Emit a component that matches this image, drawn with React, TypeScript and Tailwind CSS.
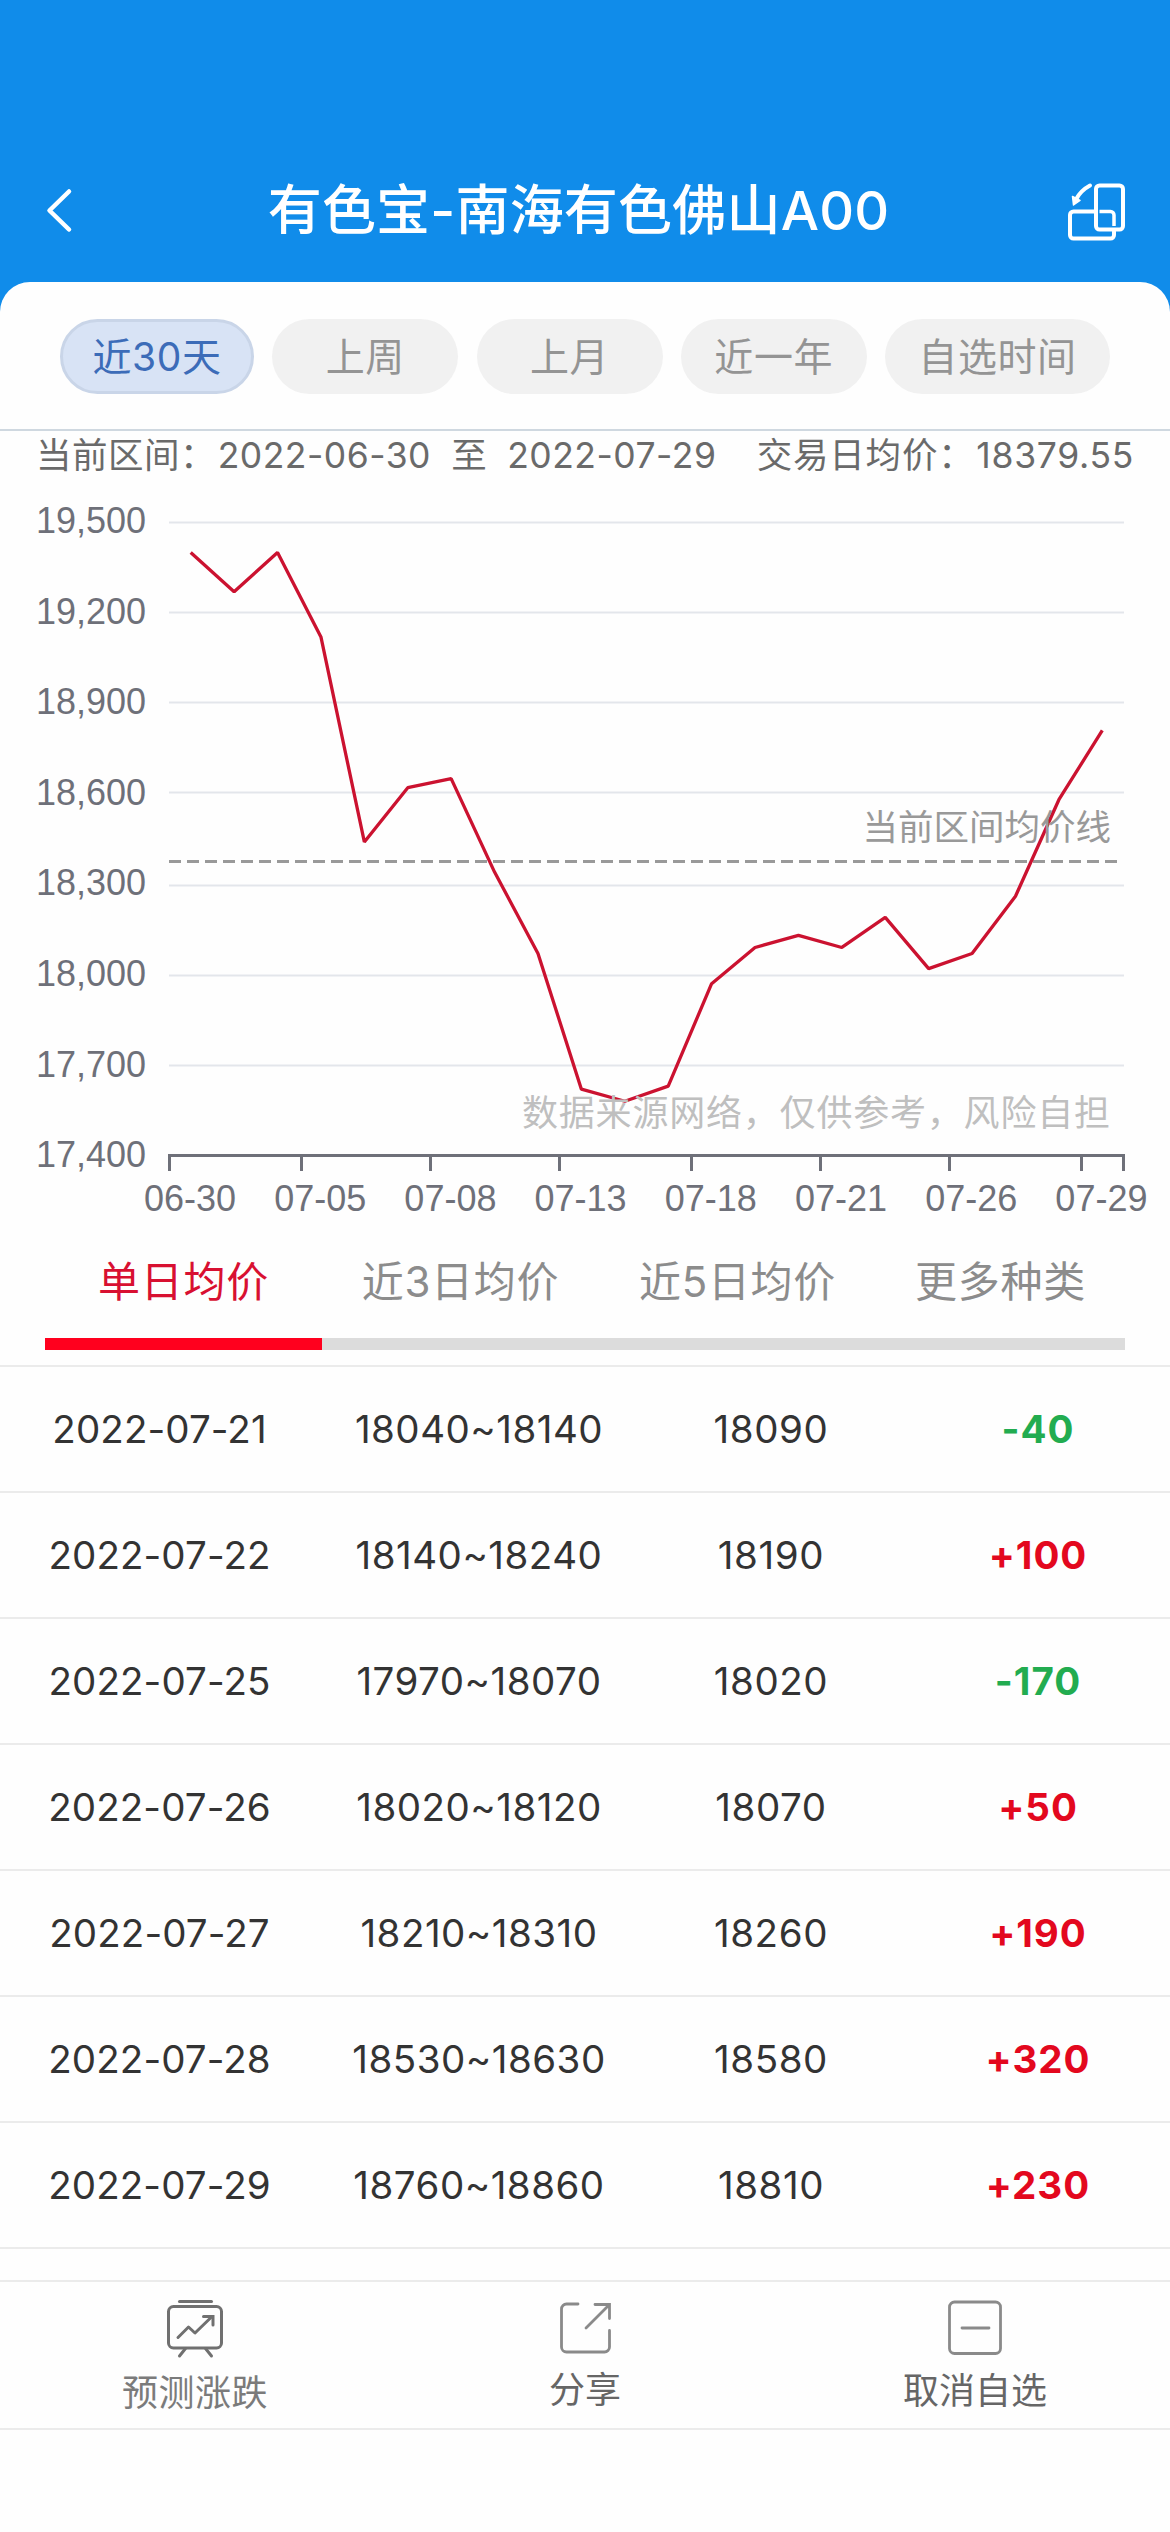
const ranges = [
  { label: '近30天', width: 'w-[194px]', active: true },
  { label: '上周', width: 'w-[186px]' },
  { label: '上月', width: 'w-[186px]' },
  { label: '近一年', width: 'w-[186px]' },
  { label: '自选时间', width: 'w-[225px]' },
];

const prices = [
  19400, 19270, 19400, 19120, 18440, 18620, 18650, 18340, 18070, 17620, 17580,
  17630, 17970, 18090, 18130, 18090, 18190, 18020, 18070, 18260, 18580, 18810,
];

const yAxis = [
  { label: '19,500', y: 92 },
  { label: '19,200', y: 182 },
  { label: '18,900', y: 272 },
  { label: '18,600', y: 362 },
  { label: '18,300', y: 455 },
  { label: '18,000', y: 545 },
  { label: '17,700', y: 635 },
  { label: '17,400', y: 725 },
];

const xAxis = ['06-30', '07-05', '07-08', '07-13', '07-18', '07-21', '07-26', '07-29'];
const ticks = [169.5, 301.5, 430.5, 559.5, 691.5, 820.5, 949.5, 1081.5, 1123.5];

const tabs = ['单日均价', '近3日均价', '近5日均价', '更多种类'];

const rows = [
  { date: '2022-07-21', range: '18040~18140', avg: '18090', change: '-40' },
  { date: '2022-07-22', range: '18140~18240', avg: '18190', change: '+100' },
  { date: '2022-07-25', range: '17970~18070', avg: '18020', change: '-170' },
  { date: '2022-07-26', range: '18020~18120', avg: '18070', change: '+50' },
  { date: '2022-07-27', range: '18210~18310', avg: '18260', change: '+190' },
  { date: '2022-07-28', range: '18530~18630', avg: '18580', change: '+320' },
  { date: '2022-07-29', range: '18760~18860', avg: '18810', change: '+230' },
];

const STEP = 955 / 22;
const toX = (i: number) => 169 + (i + 0.5) * STEP;
const toY = (v: number) => 725.5 - (v - 17400) * 0.3015;

function Header() {
  return (
    <header className="flex h-[282px] items-center pt-[139px] pl-[46px] pr-[45px] text-white">
      <svg width="27" height="46" viewBox="0 0 27 46" fill="none" stroke="currentColor" strokeWidth="4.5" strokeLinecap="round" strokeLinejoin="round">
        <path d="M23 3.5 3.5 22.500l19.500 19" />
      </svg>
      <h1 className="flex-1 pl-[17px] text-center text-[54px] leading-none font-medium tracking-[0.2px] whitespace-nowrap">
        有色宝-南海有色佛山A00
      </h1>
      <svg width="58" height="60" viewBox="0 0 58 60" fill="none" stroke="currentColor" strokeWidth="4" strokeLinecap="round">
        <rect x="29" y="4.5" width="27" height="44" rx="3.5" />
        <path d="M29 30.5H6.500a3.500 3.500 0 0 0-3.500 3.500v20a3.500 3.500 0 0 0 3.500 3.500h37a3.500 3.500 0 0 0 3.500-3.500v-3.500" />
        <path d="M32.500 30.500h11a3.500 3.500 0 0 1 3.500 3.500v11" strokeWidth="3.500" strokeLinecap="butt" />
        <path d="M23 4.5C16.500 8 12 12.500 9 18.500" />
        <path d="M5.500 15.500 13 19.500 6.500 24z" fill="currentColor" strokeWidth="1.5" strokeLinejoin="round" />
      </svg>
    </header>
  );
}

function Chart() {
  return (
    <svg width="1170" height="798" viewBox="0 0 1170 798" className="block">
      {yAxis.slice(0, 7).map((t) => (
        <line key={t.label} x1="169" x2="1124" y1={t.y + 0.5} y2={t.y + 0.5} stroke="#e3e6eb" strokeWidth="2" />
      ))}
      <g fill="#6e7079" className="font-['Liberation_Sans',sans-serif] text-[36px]">
        {yAxis.map((t, i) => (
          <text key={t.label} x="146" y={103 + i * 90.6} textAnchor="end">{t.label}</text>
        ))}
        {xAxis.map((label, i) => (
          <text key={label} x={190 + i * 130.2} y="780.5" textAnchor="middle">{label}</text>
        ))}
      </g>
      <g stroke="#6e7079" strokeWidth="3">
        <line x1="168" x2="1125" y1="725.5" y2="725.5" />
        {ticks.map((x) => (
          <line key={x} x1={x} x2={x} y1="725" y2="741" />
        ))}
      </g>
      <line x1="169" x2="1117" y1="431.5" y2="431.5" stroke="#999999" strokeWidth="3" strokeDasharray="12 6" />
      <polyline
        points={prices.map((v, i) => `${toX(i)},${toY(v)}`).join(' ')}
        fill="none"
        stroke="#cb1230"
        strokeWidth="3.3"
        strokeLinejoin="bevel"
      />
      <text x="1111" y="410" textAnchor="end" fill="#999999" className="text-[35.500px]">当前区间均价线</text>
      <text x="522" y="696" fill="#bfbfbf" className="text-[36px] tracking-[0.8px]">数据来源网络，仅供参考，风险自担</text>
    </svg>
  );
}

function Tabs() {
  return (
    <div className="px-[45px]">
      <div className="grid grid-cols-[277px_277px_277px_249px] h-[80px] items-center text-center text-[42px] leading-none tracking-[0.7px] text-[#8c8c8c]">
        {tabs.map((tab, i) => (
          <button key={tab} className={i === 0 ? 'text-[#d81031]' : ''}>{tab}</button>
        ))}
      </div>
      <div className="mt-[16px] h-3 bg-[#dcdcdc]">
        <div className="h-3 w-[277px] bg-[#ff001e]" />
      </div>
    </div>
  );
}

function PriceTable() {
  return (
    <div className="mt-[15px] border-t-2 border-[#ebebeb]">
      {rows.map((row) => (
        <div
          key={row.date}
          className="grid h-[126px] grid-cols-[319px_318px_267px_266px] items-center border-b-2 border-[#ebebeb] text-center text-[38.5px] leading-none text-[#333333]"
        >
          <span className="tracking-[0.1px]">{row.date}</span>
          <span className="pl-[2px] tracking-[0.5px]">{row.range}</span>
          <span className="pl-[1px] tracking-[0.6px]">{row.avg}</span>
          <span
            className={`pl-[2px] font-bold tracking-[1px] ${row.change.startsWith('-') ? 'text-[#22ac50]' : 'text-[#e3081e]'}`}
          >
            {row.change}
          </span>
        </div>
      ))}
    </div>
  );
}

function BottomBar() {
  return (
    <nav className="mt-[31px] grid h-[150px] grid-cols-3 border-y-2 border-[#ebebeb] text-center text-[36px] leading-none text-[#666666]">
      <button className="flex flex-col items-center pt-[17px]">
        <svg width="60" height="60" viewBox="0 0 60 60" fill="none" stroke="#707070" strokeWidth="3" strokeLinecap="round" strokeLinejoin="round">
          <path d="M14.5 2.5h32" />
          <rect x="3.5" y="7.5" width="53" height="41.5" rx="5" />
          <path d="M13 38.5 23.5 28l6.5 6 16.5-16" />
          <path d="M38.5 17.5h9.5v8.5" strokeLinejoin="miter" />
          <path d="m20.5 49.5-6 7.5M40.5 49.5l6 7.5" />
        </svg>
        <span className="mt-[16px] tracking-[0.5px] text-[#7b7b7b]">预测涨跌</span>
      </button>
      <button className="flex flex-col items-center pt-[17px]">
        <svg width="60" height="60" viewBox="0 0 60 60" fill="none" stroke="#8a8a8a" strokeWidth="2.8" strokeLinecap="round">
          <path d="M23 5H11.5a5 5 0 0 0-5 5v38a5 5 0 0 0 5 5h38a5 5 0 0 0 5-5V31.5" />
          <path d="M31 29 54 6M40 5.5h14.5v14" />
        </svg>
        <span className="mt-[13px]">分享</span>
      </button>
      <button className="flex flex-col items-center pt-[17px]">
        <svg width="60" height="60" viewBox="0 0 60 60" fill="none" stroke="#8a8a8a" strokeWidth="2.8" strokeLinecap="round">
          <rect x="4.5" y="3" width="51" height="51.5" rx="5" />
          <path d="M17 29h27" />
        </svg>
        <span className="mt-[14px]">取消自选</span>
      </button>
    </nav>
  );
}

export default function App() {
  return (
    <div className="flex h-[2532px] w-[1170px] flex-col overflow-hidden bg-[#108cea] font-['Inter','Noto_Sans_CJK_SC',sans-serif]">
      <Header />
      <main className="flex-1 rounded-t-[30px] bg-[#fefefe]">
        <div className="flex h-[149px] justify-between border-b-2 border-[#cfd8e0] px-[60px] pt-[37px] text-[39px] leading-none tracking-[0.6px]">
          {ranges.map((r) => (
            <button
              key={r.label}
              className={`${r.width} h-[75px] rounded-full ${r.active ? 'border-3 border-[#c9d5e8] bg-[#d8e3f5] text-[#3c6cb8]' : 'bg-[#f1f1f1] text-[#949494]'}`}
            >
              {r.label}
            </button>
          ))}
        </div>

        {/* Current range and its average */}
        <div className="flex h-[49px] items-center px-[36px] text-[35.5px] leading-none tracking-[0.5px] whitespace-nowrap text-[#6a6a6a]">
          <span className="w-[182px]">当前区间：</span>
          <span className="w-[234px]">2022-06-30</span>
          <span className="w-[56px]">至</span>
          <span className="w-[250px]">2022-07-29</span>
          <span className="w-[220px] tracking-[0.8px]">交易日均价：</span>
          <span className="tracking-[0.7px]">18379.55</span>
        </div>

        <div className="-mt-[50px]">
          <Chart />
        </div>
        <div className="mt-[14px]">
          <Tabs />
        </div>
        <PriceTable />
        <BottomBar />
      </main>
    </div>
  );
}
